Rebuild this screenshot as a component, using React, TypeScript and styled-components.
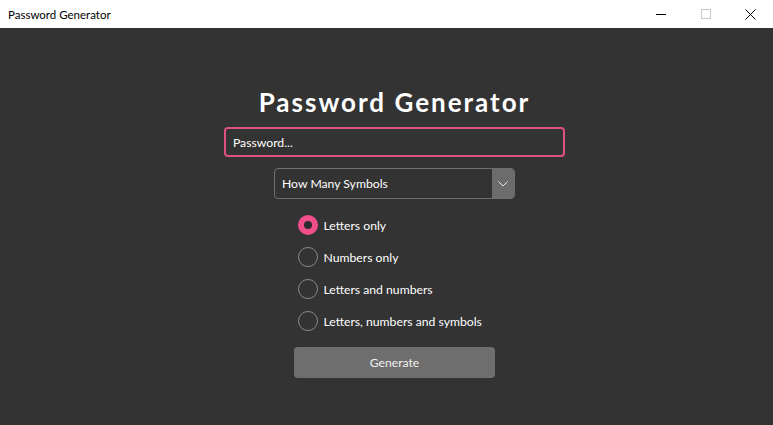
import React, { useState } from 'react';
import styled, { createGlobalStyle } from 'styled-components';

const GlobalStyle = createGlobalStyle`
  html, body {
    margin: 0;
    padding: 0;
    height: 100%;
    background: #333333;
  }
  #root {
    height: 100%;
  }
`;

const Window = styled.div`
  display: flex;
  flex-direction: column;
  width: 773px;
  height: 425px;
  font-family: 'Lato', 'Noto Sans', sans-serif;
`;

const TitleBar = styled.div`
  display: flex;
  align-items: center;
  height: 28px;
  background: #ffffff;
  flex-shrink: 0;
`;

const TitleText = styled.span`
  flex: 1;
  padding-left: 8px;
  font-size: 11.5px;
  color: #000;
`;

const WinButton = styled.div`
  display: flex;
  align-items: center;
  justify-content: center;
  width: 45px;
  height: 28px;
`;

const Main = styled.main`
  flex: 1;
  display: flex;
  flex-direction: column;
  align-items: center;
  padding-top: 59px;
  padding-left: 16px;
  background: #333333;
`;

const Heading = styled.h1`
  margin: 0 0 10px;
  font-family: 'Lato', sans-serif;
  font-weight: 700;
  font-size: 26px;
  letter-spacing: 2px;
  line-height: 30px;
  color: #ffffff;
`;

const PasswordInput = styled.input`
  box-sizing: border-box;
  width: 341px;
  height: 30px;
  padding: 0 7px;
  background: #333333;
  border: 2px solid #e0527e;
  border-radius: 4px;
  color: #ffffff;
  font-family: inherit;
  font-size: 12.2px;
  outline: none;

  &::placeholder {
    color: #ffffff;
  }
`;

const SelectBox = styled.div`
  box-sizing: border-box;
  display: flex;
  align-items: stretch;
  width: 241px;
  height: 31px;
  margin-top: 11px;
  border: 1px solid #6f6f6f;
  border-radius: 4px;
  overflow: hidden;
`;

const SelectLabel = styled.span`
  flex: 1;
  display: flex;
  align-items: center;
  padding-left: 7px;
  font-size: 12.2px;
  color: #ffffff;
`;

const SelectArrow = styled.span`
  display: flex;
  align-items: center;
  justify-content: center;
  width: 22px;
  background: #6c6c6c;
`;

const RadioList = styled.div`
  display: flex;
  flex-direction: column;
  gap: 12px;
  width: 194px;
  margin-top: 16px;
`;

const RadioRow = styled.label`
  display: flex;
  align-items: center;
  gap: 6px;
  height: 20px;
  font-size: 12.2px;
  color: #ffffff;
  cursor: pointer;
`;

const RadioCircle = styled.span<{ $checked: boolean }>`
  box-sizing: border-box;
  display: flex;
  align-items: center;
  justify-content: center;
  width: 20px;
  height: 20px;
  border-radius: 50%;
  background: ${(p) => (p.$checked ? '#f0508a' : 'transparent')};
  border: ${(p) => (p.$checked ? 'none' : '1.5px solid #8a8a8a')};

  &::after {
    content: '';
    display: ${(p) => (p.$checked ? 'block' : 'none')};
    width: 8px;
    height: 8px;
    border-radius: 50%;
    background: #2b2b2b;
  }
`;

const GenerateButton = styled.button`
  width: 201px;
  height: 31px;
  margin-top: 16px;
  border: none;
  border-radius: 4px;
  background: #6e6e6e;
  color: #f2f2f2;
  font-family: inherit;
  font-size: 12.2px;
  cursor: pointer;
`;

const options = [
  'Letters only',
  'Numbers only',
  'Letters and numbers',
  'Letters, numbers and symbols'
];

const App = () => {
  const [selected, setSelected] = useState(0);

  return (
    <>
      <GlobalStyle />
      <Window>
        <TitleBar>
          <TitleText>Password Generator</TitleText>
          <WinButton>
            <svg width="10" height="10" viewBox="0 0 10 10">
              <line x1="0" y1="5.5" x2="10" y2="5.5" stroke="#000" strokeWidth="1" />
            </svg>
          </WinButton>
          <WinButton>
            <svg width="10" height="10" viewBox="0 0 10 10">
              <rect x="0.5" y="0.5" width="9" height="9" fill="none" stroke="#c8c8c8" strokeWidth="1" />
            </svg>
          </WinButton>
          <WinButton>
            <svg width="11" height="11" viewBox="0 0 11 11">
              <path d="M0.5 0.5 L10.5 10.5 M10.5 0.5 L0.5 10.5" stroke="#000" strokeWidth="1" />
            </svg>
          </WinButton>
        </TitleBar>
        <Main>
          <Heading>Password Generator</Heading>
          <PasswordInput placeholder="Password..." />
          <SelectBox>
            <SelectLabel>How Many Symbols</SelectLabel>
            <SelectArrow>
              <svg width="10" height="6" viewBox="0 0 10 6">
                <path d="M0.5 0.5 L5 5 L9.5 0.5" fill="none" stroke="#e8e8e8" strokeWidth="1" />
              </svg>
            </SelectArrow>
          </SelectBox>
          <RadioList>
            {options.map((opt, i) => (
              <RadioRow key={opt} onClick={() => setSelected(i)}>
                <RadioCircle $checked={selected === i} />
                {opt}
              </RadioRow>
            ))}
          </RadioList>
          <GenerateButton>Generate</GenerateButton>
        </Main>
      </Window>
    </>
  );
};

export default App;
